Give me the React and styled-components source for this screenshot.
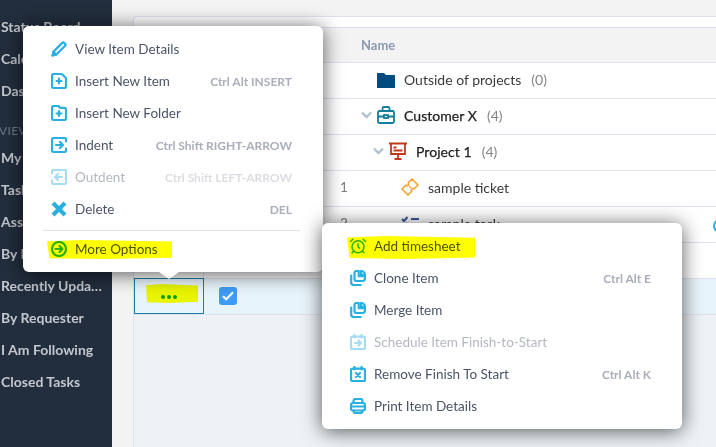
import React from 'react'
import styled, { createGlobalStyle } from 'styled-components'
import { AlarmClock } from 'lucide-react'

const GlobalStyle = createGlobalStyle`
    html, body {
        margin: 0;
        padding: 0;
        background: #f3f3f3;
        overflow: hidden;
    }
    * {
        box-sizing: border-box;
    }
`

const Page = styled.div`
    position: relative;
    display: flex;
    width: 716px;
    height: 447px;
    overflow: hidden;
    font-family: Lato, "Open Sans", sans-serif;
`

const Sidebar = styled.nav`
    flex: 0 0 112px;
    padding: 11px 0 0 1px;
    background-color: #222e3d;
`
const SideItem = styled.div`
    height: 32px;
    width: 104px;
    line-height: 32px;
    font-size: 14px;
    font-weight: 700;
    color: #c3c7cd;
    white-space: nowrap;
    overflow: hidden;
    text-overflow: ellipsis;
`
const SideHeading = styled.div`
    height: 35px;
    padding-top: 15px;
    margin-left: -2px;
    line-height: 18px;
    font-size: 12px;
    letter-spacing: 0.4px;
    color: #6c7888;
`

const Main = styled.main`
    flex: 1;
    min-width: 0;
    padding: 16px 0 0 21px;
    background-color: #f3f3f3;
`
const Table = styled.div`
    height: 100%;
    border-top: 1px solid #dfe1ee;
    border-left: 1px solid #dfe1ee;
    border-top-left-radius: 4px;
    background-color: #eef2f5;
    overflow: hidden;
`
const Toolbar = styled.div`
    height: 10px;
    background-color: #fff;
`
const HeaderRow = styled.div`
    display: grid;
    grid-template-columns: 70px 136px 1fr;
    align-items: center;
    height: 36px;
    padding-bottom: 1px;
    border-top: 1px solid #dfe1ee;
    border-bottom: 1px solid #dfe1ee;
    background-color: #f3f3f3;
`
const HeaderName = styled.div`
    grid-column: 3;
    padding-left: 21px;
    font-size: 13px;
    font-weight: 700;
    color: #8c9bb3;
`
const Row = styled.div`
    position: relative;
    display: grid;
    grid-template-columns: 70px 136px 373px 1fr;
    height: 36px;
    border-bottom: 1px solid #dfe1ee;
    background-color: ${p => (p.$selected ? '#e8f4fb' : '#fff')};
`
const ActionCell = styled.div`
    display: flex;
    align-items: center;
    justify-content: center;
    border-right: 1px solid #dfe1ee;
    ${p => p.$active && 'border: 1px solid #1a7fa8; margin-top: -1px;'}
`
const Dots = styled.div`
    display: flex;
    gap: 2px;
    margin-top: 2px;
    span {
        width: 4px;
        height: 4px;
        border-radius: 50%;
        background-color: #0a9fc0;
    }
`
const CheckCell = styled.div`
    display: flex;
    align-items: center;
    padding: 0 0 1px 15px;
`
const Checkbox = styled.div`
    display: flex;
    align-items: center;
    justify-content: center;
    width: 18px;
    height: 18px;
    border-radius: 3px;
    background-color: #3f9bf5;
`
const NameCell = styled.div`
    display: flex;
    align-items: center;
    padding-bottom: 3px;
    font-size: 14px;
    color: #333;
`
const RowNumber = styled.span`
    flex: 0 0 21px;
    font-size: 13.5px;
    color: #7d7d7d;
`
const Chevron = styled.svg`
    flex: 0 0 11px;
    width: 11px;
    height: 8px;
    margin-left: ${p => p.$level * 12}px;
    margin-right: 5px;
`
const TreeIcon = styled.svg`
    flex: 0 0 18px;
    width: 18px;
    height: 18px;
    margin-left: ${p => p.$indent || 0}px;
    margin-right: 9px;
`
const ItemName = styled.span`
    color: ${p => (p.$bold ? '#222' : '#3a3a3a')};
    ${p => p.$bold && '-webkit-text-stroke: 0.25px #222; letter-spacing: 0.05px;'}
`
const Count = styled.span`
    margin-left: 10px;
    color: #858585;
`
const StatusCell = styled.div`
    display: flex;
    align-items: center;
`
const StatusRing = styled.div`
    flex: none;
    width: 14px;
    height: 14px;
    margin-top: 3px;
    border: 2px solid #2ab0e0;
    border-radius: 50%;
`

const Menu = styled.div`
    position: absolute;
    left: ${p => p.$left}px;
    top: ${p => p.$top}px;
    width: ${p => p.$width}px;
    padding: 7px 0;
    border-radius: 6px;
    background-color: #fff;
    box-shadow: 0 2px 20px rgba(0, 0, 0, 0.65);
    &::after {
        content: ${p => (p.$notch ? '""' : 'none')};
        position: absolute;
        left: 136px;
        bottom: -7px;
        border-left: 10px solid transparent;
        border-right: 10px solid transparent;
        border-top: 7px solid #fff;
    }
`
const MenuItem = styled.div`
    position: relative;
    display: flex;
    align-items: center;
    height: 32px;
    padding: 0 31px 0 28px;
    opacity: ${p => (p.$disabled ? 0.42 : 1)};
`
const MenuIcon = styled.svg`
    flex: 0 0 16px;
    width: 16px;
    height: 16px;
    margin-right: 8px;
    fill: none;
    stroke: #2ab0e0;
    stroke-width: 2.2;
    stroke-linecap: round;
    stroke-linejoin: round;
`
const MenuLabel = styled.span`
    flex: 1;
    font-size: 13.5px;
    color: #4b5468;
    white-space: nowrap;
`
const Shortcut = styled.span`
    font-size: 12px;
    font-weight: 700;
    color: #a9aeba;
    white-space: nowrap;
`
const Divider = styled.div`
    height: 1px;
    margin: 5px 23px 2px 20px;
    background-color: #e2e3ea;
`
// marker scribbles laid over the finished screenshot
const Marker = styled.div`
    position: absolute;
    left: ${p => p.$left}px;
    top: ${p => p.$top}px;
    width: ${p => p.$width}px;
    height: ${p => p.$height}px;
    background-color: #ffff00;
    mix-blend-mode: multiply;
    clip-path: polygon(0 6%, 30% 0, 100% 8%, 100% 94%, 45% 100%, 2% 96%);
    z-index: 5;
`

const icons = {
    pencil: (
        <>
            <path d="M1.6 14.4l.9-3.8L11 2.1a1.7 1.7 0 0 1 2.4 0l.5.5a1.7 1.7 0 0 1 0 2.4l-8.5 8.5z" />
            <path d="M2.5 10.8l2.7 2.7M1.5 14.5l1.2-2.8 1.6 1.6z" fill="#2ab0e0" />
        </>
    ),
    file: (
        <>
            <path d="M10 1H2.6A1.6 1.6 0 0 0 1 2.6v10.8A1.6 1.6 0 0 0 2.6 15h10.8a1.6 1.6 0 0 0 1.6-1.6V6" />
            <path d="M11 1.2L15 5" />
            <path d="M8 5.5v5M5.5 8h5" />
        </>
    ),
    folder: (
        <>
            <path d="M9 2.8L7.5 1H2.6A1.6 1.6 0 0 0 1 2.6v10.8A1.6 1.6 0 0 0 2.6 15h10.8a1.6 1.6 0 0 0 1.6-1.6V4.4a1.6 1.6 0 0 0-1.6-1.6z" />
            <path d="M8 6v5M5.5 8.5h5" />
        </>
    ),
    indent: (
        <>
            <path d="M15 4.5V2.6A1.6 1.6 0 0 0 13.4 1H2.6A1.6 1.6 0 0 0 1 2.6v10.8A1.6 1.6 0 0 0 2.6 15h10.8a1.6 1.6 0 0 0 1.6-1.6v-1.9" />
            <path d="M5 8h7M9 5l3 3-3 3" />
        </>
    ),
    outdent: (
        <>
            <path d="M1 4.5V2.6A1.6 1.6 0 0 1 2.6 1h10.8A1.6 1.6 0 0 1 15 2.6v10.8a1.6 1.6 0 0 1-1.6 1.6H2.6A1.6 1.6 0 0 1 1 13.4v-1.9" />
            <path d="M11 8H4M7 5L4 8l3 3" />
        </>
    ),
    cross: <path d="M2 2l12 12M14 2L2 14" strokeWidth="4.2" strokeLinecap="butt" />,
    more: (
        <>
            <circle cx="8" cy="8" r="7" />
            <path d="M4.5 8h7M8.5 5l3 3-3 3" />
        </>
    ),
    clone: (
        <>
            <path d="M6.5 1h2.2v5.2H15v2.3a2.5 2.5 0 0 1-2.5 2.5h-6A2 2 0 0 1 4.5 9V3a2 2 0 0 1 2-2z" />
            <path d="M11 1a4 4 0 0 1 4 3.8h-4z" />
            <path d="M1.2 5.5v7A2.5 2.5 0 0 0 3.7 15h7" />
        </>
    ),
    calendarArrow: (
        <>
            <rect x="1" y="2.6" width="14" height="12.4" rx="1.5" />
            <path d="M4.5 1v2.5M11.5 1v2.5" />
            <path d="M5 9h6M8.5 6.5L11 9l-2.5 2.5" />
        </>
    ),
    calendarCross: (
        <>
            <rect x="1" y="2.6" width="14" height="12.4" rx="1.5" />
            <path d="M4.5 1v2.5M11.5 1v2.5" />
            <path d="M6 7l4 4M10 7l-4 4" />
        </>
    ),
    printer: (
        <>
            <path d="M3.5 5V3a2 2 0 0 1 2-2h5a2 2 0 0 1 2 2v2" />
            <rect x="1" y="5" width="14" height="7.5" rx="2" />
            <path d="M3.5 12.5V13a2 2 0 0 0 2 2h5a2 2 0 0 0 2-2v-.5" />
            <path d="M1 8.5h14" />
        </>
    ),
}

function Icon({ name }) {
    return <MenuIcon viewBox="0 0 16 16">{icons[name]}</MenuIcon>
}

const AlarmIcon = styled(AlarmClock)`
    flex: 0 0 18px;
    margin: 0 7px 0 -1px;
    color: #2ab0e0;
`

const firstMenu = [
    { icon: 'pencil', label: 'View Item Details' },
    { icon: 'file', label: 'Insert New Item', keys: 'Ctrl Alt INSERT' },
    { icon: 'folder', label: 'Insert New Folder' },
    { icon: 'indent', label: 'Indent', keys: 'Ctrl Shift RIGHT-ARROW' },
    { icon: 'outdent', label: 'Outdent', keys: 'Ctrl Shift LEFT-ARROW', disabled: true },
    { icon: 'cross', label: 'Delete', keys: 'DEL' },
]

const secondMenu = [
    { icon: 'clone', label: 'Clone Item', keys: 'Ctrl Alt E' },
    { icon: 'clone', label: 'Merge Item' },
    { icon: 'calendarArrow', label: 'Schedule Item Finish-to-Start', disabled: true },
    { icon: 'calendarCross', label: 'Remove Finish To Start', keys: 'Ctrl Alt K' },
    { icon: 'printer', label: 'Print Item Details' },
]

function Item({ icon, label, keys, disabled }) {
    return (
        <MenuItem $disabled={disabled}>
            <Icon name={icon} />
            <MenuLabel>{label}</MenuLabel>
            {keys && <Shortcut>{keys}</Shortcut>}
        </MenuItem>
    )
}

function Caret({ level }) {
    return (
        <Chevron $level={level} viewBox="0 0 11 8" fill="none" stroke="#b4c1d1" strokeWidth="2.4">
            <path d="M1 1.5l4.5 4.5L10 1.5" />
        </Chevron>
    )
}

export default function App() {
    return (
        <Page>
            <GlobalStyle />
            <Sidebar>
                <SideItem>Status Board</SideItem>
                <SideItem>Calendar</SideItem>
                <SideItem>Dashboards</SideItem>
                <SideHeading>VIEWS</SideHeading>
                <SideItem>My Tasks</SideItem>
                <SideItem>Tasks</SideItem>
                <SideItem>Assigned</SideItem>
                <SideItem>By Priority</SideItem>
                <SideItem>Recently Updated</SideItem>
                <SideItem>By Requester</SideItem>
                <SideItem>I Am Following</SideItem>
                <SideItem>Closed Tasks</SideItem>
            </Sidebar>
            <Main>
                <Table>
                    <Toolbar />
                    <HeaderRow>
                        <HeaderName>Name</HeaderName>
                    </HeaderRow>
                    <Row>
                        <ActionCell />
                        <div />
                        <NameCell>
                            <RowNumber />
                            <TreeIcon $indent={16} viewBox="0 0 18 18">
                                <path d="M0 3h7l2 2h9v13H0z" fill="#004b80" />
                            </TreeIcon>
                            <ItemName>Outside of projects</ItemName>
                            <Count>(0)</Count>
                        </NameCell>
                    </Row>
                    <Row>
                        <ActionCell />
                        <div />
                        <NameCell>
                            <RowNumber />
                            <Caret level={0} />
                            <TreeIcon viewBox="0 0 18 18" fill="none" stroke="#0f7f9c" strokeWidth="1.8">
                                <rect x="1" y="5" width="16" height="12" rx="1.5" />
                                <path d="M5.5 5V2.5a1.5 1.5 0 0 1 1.5-1.5h4a1.5 1.5 0 0 1 1.5 1.5V5M1 10.5h6M11 10.5h6" />
                                <rect x="7" y="9" width="4" height="3" />
                            </TreeIcon>
                            <ItemName $bold>Customer X</ItemName>
                            <Count>(4)</Count>
                        </NameCell>
                    </Row>
                    <Row>
                        <ActionCell />
                        <div />
                        <NameCell>
                            <RowNumber />
                            <Caret level={1} />
                            <TreeIcon viewBox="0 0 18 18" fill="none" stroke="#c0391b" strokeWidth="1.8">
                                <path d="M0 1.5h18M2 1.5v10.5h14V1.5M9 12v5M5.5 17h7" />
                                <path d="M4.5 5.5h3M4.5 8.5h9" />
                            </TreeIcon>
                            <ItemName $bold>Project 1</ItemName>
                            <Count>(4)</Count>
                        </NameCell>
                    </Row>
                    <Row>
                        <ActionCell />
                        <div />
                        <NameCell>
                            <RowNumber>1</RowNumber>
                            <TreeIcon $indent={40} viewBox="0 0 18 18" fill="none" stroke="#f5a030" strokeWidth="1.6" strokeLinejoin="round">
                                <path d="M11 1l6 6-3.8 3.8a1.7 1.7 0 0 0-2.4 2.4L7 17l-6-6 3.8-3.8a1.7 1.7 0 0 0 2.4-2.4z" />
                                <path d="M8.3 8.3l1.4 1.4" />
                            </TreeIcon>
                            <ItemName>sample ticket</ItemName>
                        </NameCell>
                    </Row>
                    <Row>
                        <ActionCell />
                        <div />
                        <NameCell>
                            <RowNumber>2</RowNumber>
                            <TreeIcon $indent={40} viewBox="0 0 18 18" fill="none" stroke="#3a5a9b" strokeWidth="2">
                                <path d="M1 5l2 2 3.5-4M10 5h8M1 11l2 2 3.5-4M10 11h8" />
                            </TreeIcon>
                            <ItemName>sample task</ItemName>
                        </NameCell>
                        <StatusCell>
                            <StatusRing />
                        </StatusCell>
                    </Row>
                    <Row>
                        <ActionCell />
                    </Row>
                    <Row $selected>
                        <ActionCell $active>
                            <Dots>
                                <span />
                                <span />
                                <span />
                            </Dots>
                        </ActionCell>
                        <CheckCell>
                            <Checkbox>
                                <svg width="12" height="10" viewBox="0 0 12 10" fill="none" stroke="#fff" strokeWidth="2.2">
                                    <path d="M1 5.2l3.2 3L11 1.2" />
                                </svg>
                            </Checkbox>
                        </CheckCell>
                    </Row>
                </Table>
            </Main>

            <Menu $left={23} $top={26} $width={300} $notch>
                {firstMenu.map(item => (
                    <Item key={item.label} {...item} />
                ))}
                <Divider />
                <Item icon="more" label="More Options" />
            </Menu>

            <Menu $left={322} $top={223} $width={360}>
                <MenuItem>
                    <AlarmIcon size={18} strokeWidth={2} />
                    <MenuLabel>Add timesheet</MenuLabel>
                </MenuItem>
                {secondMenu.map(item => (
                    <Item key={item.label} {...item} />
                ))}
            </Menu>

            <Marker $left={47} $top={240} $width={125} $height={19} />
            <Marker $left={347} $top={236} $width={128} $height={23} />
            <Marker $left={146} $top={284} $width={52} $height={19} />
        </Page>
    )
}
